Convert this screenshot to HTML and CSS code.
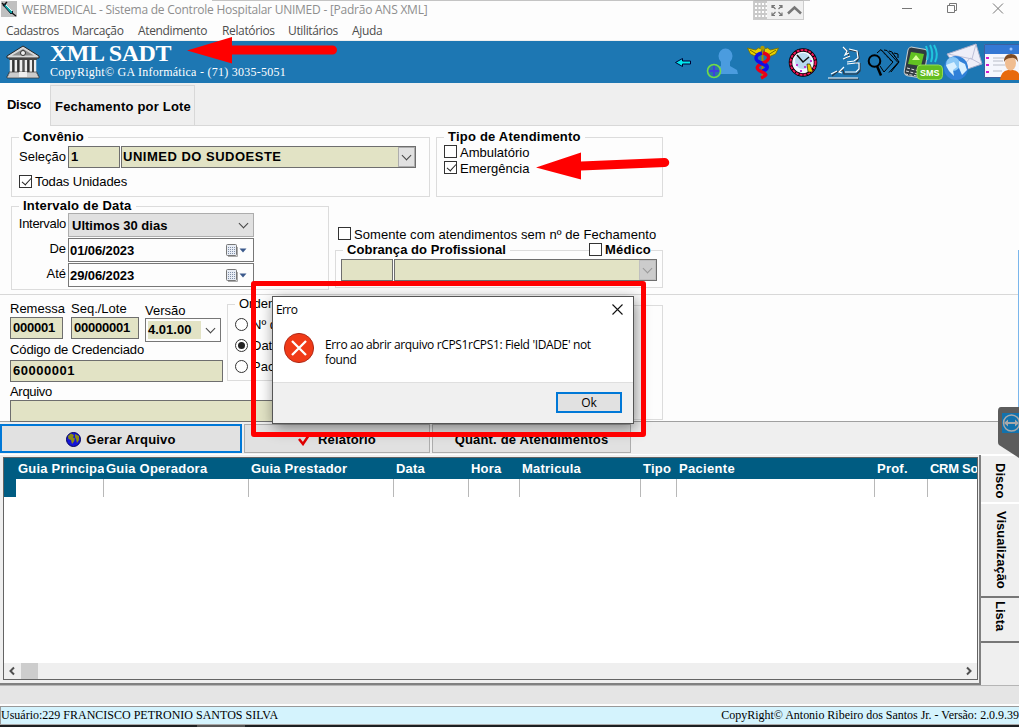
FILE: index.html
```html
<!DOCTYPE html>
<html lang="pt-BR">
<head>
<meta charset="utf-8">
<title>WEBMEDICAL</title>
<link rel="stylesheet" href="styles.css">
</head>
<body>
<div class="window">
  <header class="titlebar">
    <svg class="app-icon" width="16" height="16" viewBox="0 0 16 16"><rect width="16" height="16" fill="#c0c0c0"/><path d="M1 2l3 3M2 5l4-4" stroke="#111" stroke-width="1.5"/><path d="M4 3l8 8-2 2-7-8z" fill="#10a5a5" stroke="#123" /><path d="M5 4l6 6" stroke="#dff"/><path d="M11 12l4 3" stroke="#111" stroke-width="1.3"/></svg>
    <span class="title">WEBMEDICAL - Sistema de Controle Hospitalar UNIMED - [Padrão ANS XML]</span>
    <svg class="win-buttons" width="102" height="18" viewBox="0 0 102 18" fill="none" stroke="#777"><path d="M0 7.500h10M45.500 4.500h7v7h-7zM47.500 4v-1.500h7v7h-1.500M91 2.500l10 10M101 2.500l-10 10"/></svg>
  </header>
  <nav class="menu">
    <span class="m1">Cadastros</span><span class="m2">Marcação</span><span class="m3">Atendimento</span><span class="m4">Relatórios</span><span class="m5">Utilitários</span><span class="m6">Ajuda</span>
  </nav>
  <section class="banner">
    <svg class="bank" width="34" height="34" viewBox="0 0 34 34"><path d="M1 11L17 1l16 10v2H1z" fill="#d8d8d8" stroke="#222"/><path d="M6 10.500L17 4l11 6.500z" fill="#8a8a8a"/><circle cx="17" cy="8" r="2.500" fill="#eee" stroke="#333"/><path d="M3 13h28v2H3z" fill="#444"/><path d="M4 15h26v12H4z" fill="#555"/><path d="M5 15v12M10 15v12M15 15v12M20 15v12M25 15v12M29 15v12" stroke="#eee" stroke-width="2.500"/><path d="M7 15v12M12 15v12M22 15v12M27 15v12" stroke="#111"/><path d="M3 27h28v2h1v2h1v2H1v-2h1v-2h1z" fill="#ccc" stroke="#333" stroke-width=".7"/><path d="M13 27h8v5h-8z" fill="#eee"/></svg>
    <div class="brand"><h1>XML SADT</h1><p>CopyRight© GA Informática - (71) 3035-5051</p></div>
    <div class="tools">
      <svg width="345" height="42" viewBox="674 41 345 42">
        <path d="M675.500 62.500l7-4v2.500h8v3h-8v2.500z" fill="#00e8f0" stroke="#003" stroke-width="1"/>
        <ellipse cx="725.500" cy="56" rx="7" ry="7.500" fill="#4b9cdf"/><path d="M721 60h9v6l7 4 1 4h-27l4-5 6-3z" fill="#4b9cdf"/>
        <circle cx="714" cy="71" r="6.500" fill="#2a78a8" stroke="#72dc48" stroke-width="1.600"/><path d="M714 66v10M709 71h10" stroke="#403fe0" stroke-width="2"/>
        <path d="M747.500 48l3 6 7 3 4-5v-3l-3-1-3 2zM778.500 48l-3 6-7 3-4-5v-3l3-1 3 2z" fill="#e8d000" stroke="#776b00" stroke-width=".8"/><path d="M750 50l8 5M776 50l-8 5" stroke="#776b00"/><circle cx="762.500" cy="48" r="2.200" fill="#b09a00"/><path d="M762.500 49v30" stroke="#a09000" stroke-width="2"/><path d="M762 53c-8 2-8 8 0 10s6 7 0 8" fill="none" stroke="#1010e8" stroke-width="3.400"/><path d="M763 53c8 2 7 7 0 10s-8 6-1 9 3 4-1 6" fill="none" stroke="#e80018" stroke-width="3.400"/><path d="M757.500 61q4 3 9 5" fill="none" stroke="#1010e8" stroke-width="3"/>
        <circle cx="803" cy="62.500" r="12.500" fill="#f4f8ff" stroke="#000" stroke-width="3.500"/><circle cx="803" cy="62.500" r="12.500" fill="none" stroke="#f01458" stroke-width="2" stroke-dasharray="3 1"/><circle cx="803" cy="61" r="8" fill="#b8d9ee"/><path d="M797 55l6 7 6-5" fill="none" stroke="#111" stroke-width="1.500"/><path d="M807 64h3l3 8h-5z" fill="#ecd000" stroke="#000" stroke-width=".6"/><path d="M804 67h2M796 65h2M810 61h2M800 71h2" stroke="#c03ad0" stroke-width="2"/>
        <g fill="none" stroke-width="1.200"><path d="M844 48l4 4 1 4-4 3M849 50l9 2 1 6-4 6M832 76l5-4 6-2 1 4h13l3-3v-8M829 79h30" stroke="#303840"/><path d="M843 47l4 4-2 4 4-2M849 49l8 2 1 7-4 3-7 1M843 59l7-3M844 67l-5 5 3 1M831 74l6-3M845 72h11l3-3v-6h-3l-9 1M828 78h30" stroke="#fff"/></g>
        <g fill="none" stroke="#000"><circle cx="874.500" cy="61" r="5.800" stroke-width="2"/><path d="M877 66l4 9.500" stroke-width="2.500"/><path d="M877 53l4-3.500 12 12.500-9 10-4-6M884 50l3 .5 11 12-9 10M889 51l3 1 7 10-8 10M894 53l4 1v4" stroke-width="1"/><path d="M881 50l11 12M892 53l7 9-7 8" stroke-dasharray="1 1"/></g>
        <rect x="906" y="48" width="20" height="29" rx="4" fill="#303a40" stroke="#c6cdd0" transform="rotate(10 916 62)"/><path d="M911 52l13 2-3 12-13-2z" fill="#62c322"/><path d="M916 55l4 5h-8z" fill="#d8ff9a"/><path d="M907 68l12 3M906 71l12 3M905 74l12 2" stroke="#ddd" stroke-dasharray="3 1.500"/><path d="M926 46q3 8 1 14M930 45q4 8 1 17M934 45q5 9 1 17" fill="none" stroke="#20c5dc" stroke-width="2"/><rect x="917" y="65" width="25.500" height="14.500" rx="4" fill="#63bd20" stroke="#94dc54"/><text x="920" y="76" class="sms">SMS</text>
        <path d="M947 54l29-10 6 20-23 8z" fill="#eeeef8" stroke="#a5abc8"/><path d="M948 54l24 5 4-15M960 70l10-12 11 6" fill="none" stroke="#bec0d8"/><circle cx="956" cy="68" r="12" fill="#3180d8"/><circle cx="953" cy="64" r="7" fill="#8bc8f6"/><path d="M946 65l8-3 3 5-4 3 1 6-5-5zM959 61l6 3 2 6-5 5-3-7z" fill="#d9f0ff"/>
        <path d="M984.500 44.500H1020v33h-35.500z" fill="#f5f7fd" stroke="#3b5fa0"/><path d="M985 45h35v9h-35z" fill="#3478d4"/><circle cx="1011" cy="49" r="1.500" fill="#9cc5ff"/><path d="M986 58h3M986 65h3M986 72h3" stroke="#d01cd0" stroke-width="2"/><path d="M993 58h12M993 61h10M993 65h12M993 71h9" stroke="#b9bdc8"/><path d="M1000 80q1-9 8-10h5q6 1 7 6v4z" fill="#e86a0c"/><ellipse cx="1010.500" cy="63" rx="5.500" ry="7.500" fill="#f0bd91"/><path d="M1004 62q0-8 7-8t7 8q-3-5-7-4-5 0-7 4z" fill="#7d4a22"/>
      </svg>
    </div>
  </section>
  <div class="page-tabs"><span class="ptab on">Disco</span><span class="ptab">Fechamento por Lote</span></div>

  <section class="filters">
    <div class="frow">
      <fieldset class="group g-conv">
        <legend>Convênio</legend>
        <div class="line"><label class="lab">Seleção</label><div class="field w52">1</div><div class="field combo w295"><span class="plan">UNIMED DO SUDOESTE</span><i class="drop"></i></div></div>
        <div class="check todas"><i class="box ck"></i><span>Todas Unidades</span></div>
      </fieldset>
      <fieldset class="group g-tipo">
        <legend>Tipo de Atendimento</legend>
        <div class="check"><i class="box"></i><span>Ambulatório</span></div>
        <div class="check"><i class="box ck"></i><span>Emergência</span></div>
      </fieldset>
    </div>
    <div class="frow">
      <fieldset class="group g-int">
        <legend>Intervalo de Data</legend>
        <div class="line d"><label class="lab tight">Intervalo</label><div class="select"><span>Ultimos 30 dias</span><i class="chev"></i></div></div>
        <div class="line d"><label class="lab">De</label><div class="date"><span>01/06/2023</span><svg width="21" height="13"><use href="#cal"/></svg></div></div>
        <div class="line d"><label class="lab">Até</label><div class="date"><span>29/06/2023</span><svg width="21" height="13"><use href="#cal"/></svg></div></div>
      </fieldset>
      <div class="prof">
        <div class="check"><i class="box"></i><span class="wide">Somente com atendimentos sem nº de Fechamento</span></div>
        <fieldset class="group g-cob">
          <legend>Cobrança do Profissional</legend>
          <div class="check medico"><i class="box"></i><b>Médico</b></div>
          <div class="line"><div class="field w52"></div><div class="field combo w263"><i class="drop off"></i></div></div>
        </fieldset>
      </div>
    </div>
  </section>

  <section class="lot">
    <div class="lot-left">
      <div class="trio">
        <div class="rem"><label>Remessa</label><div class="field">000001</div></div>
        <div class="seq"><label>Seq./Lote</label><div class="field">00000001</div></div>
        <div class="ver-col"><label>Versão</label><div class="version"><span>4.01.00</span><i class="chev"></i></div></div>
      </div>
      <label class="cod">Código de Credenciado</label>
      <div class="field cred">60000001</div>
      <label class="arq">Arquivo</label>
      <div class="field arqf"></div>
    </div>
    <fieldset class="group g-ord">
      <legend>Ordenação</legend>
      <div class="radio"><i></i><span>Nº do Guia</span></div>
      <div class="radio on"><i></i><span>Data</span></div>
      <div class="radio"><i></i><span>Paciente</span></div>
    </fieldset>
    <div class="blank-group"></div>
  </section>

  <section class="actions">
    <button class="btn primary"><svg width="15" height="15" viewBox="0 0 15 15"><circle cx="7.500" cy="7.500" r="7" fill="#1414d8" stroke="#000060"/><path d="M2 4l3-2.500 3 1.500-1 2.500 2 1-1 3-2 2.500-1-4-2.500-1zM9 2l4 2v4l-2 3-1-4-1-2z" fill="#8c8c14"/></svg><span>Gerar Arquivo</span></button>
    <button class="btn b2"><svg width="12" height="12" viewBox="0 0 12 12"><path d="M1 5l4 5 6-9" fill="none" stroke="#e00000" stroke-width="2.500"/></svg><span>Relatório</span></button>
    <button class="btn b3"><span>Quant. de Atendimentos</span></button>
  </section>

  <section class="results">
    <div class="grid-frame">
      <div class="grid">
        <div class="ghead"><span>Guia Principa</span><span>Guia Operadora</span><span>Guia Prestador</span><span>Data</span><span>Hora</span><span>Matricula</span><span>Tipo</span><span>Paciente</span><span>Prof.</span><span>CRM So</span></div>
        <div class="grow"><i></i><i></i><i></i><i></i><i></i><i></i><i></i><i></i><i></i><i></i></div>
        <div class="hscroll"><svg width="8" height="10" viewBox="0 0 8 10"><path d="M6 1.500L2.500 5 6 8.500" /></svg><div class="thumb"></div><svg class="r" width="8" height="10" viewBox="0 0 8 10"><path d="M2 1.500L5.500 5 2 8.500"/></svg></div>
      </div>
    </div>
    <div class="side-tabs"><div class="s1"><span>Disco</span></div><div class="s2"><span>Visualização</span></div><div class="s3"><span>Lista</span></div></div>
  </section>
  <div class="spacer-bar"></div>
  <footer class="status"><span>Usuário:229 FRANCISCO PETRONIO SANTOS SILVA</span><span class="ver">CopyRight© Antonio Ribeiro dos Santos Jr. - Versão: 2.0.9.39</span></footer>
  <div class="taskbar"><i></i></div>

  <div class="session-bar"><svg width="50" height="18" viewBox="0 0 50 18"><path d="M0 0h13v18H0z" fill="#c9c9c9"/><g stroke="#fff" stroke-width="2" stroke-dasharray="2 1.500"><path d="M1 3h12M1 7h12M1 11h12M1 15h12"/></g><g fill="none" stroke="#777" stroke-width="1.200"><path d="M18 7V4.500h3M18 4.500l3.500 3.500M25 4.500h3V7M28 4.500L24.500 8M18 11.500v3h3M18 14.500l3.500-3.500M25 14.500h3v-3M28 14.500L24.500 11"/></g><path d="M34 12.500l6.500-6 6.500 6" fill="none" stroke="#777" stroke-width="2.500"/></svg></div>
  <div class="blue-edge"></div>
  <svg class="remote" width="21" height="51" viewBox="0 0 21 51"><path d="M3 0h18v51L1 38Q0 37 0 35V4Q0 0 3 0z" fill="#5c5c5c"/><rect x="4" y="6" width="17" height="20" fill="#1272ad"/><circle cx="13.500" cy="16" r="8" fill="none" stroke="#a9a9a9" stroke-width="1.500"/><path d="M6 16l4-3.500v2.500h7v-2.500l4 3.500-4 3.500V17h-7v2.500z" fill="#a9a9a9"/></svg>

  <div class="dialog">
    <div class="dlg-title"><span>Erro</span><svg width="11" height="11" viewBox="0 0 11 11"><path d="M.5.5l10 10M10.500.5l-10 10" stroke="#111" stroke-width="1.100"/></svg></div>
    <div class="dlg-body"><svg width="32" height="32" viewBox="0 0 32 32"><circle cx="16" cy="16" r="14.600" fill="#f03a17" stroke="#b02a18" stroke-width="1"/><path d="M9 9l14 14M23 9L9 23" stroke="#fff" stroke-width="2.300"/></svg><p><span>Erro ao abrir arquivo rCPS1rCPS1: Field 'IDADE' not</span><br><span>found</span></p></div>
    <div class="dlg-foot"><button>Ok</button></div>
  </div>
  <div class="highlight"></div>
  <svg class="arrow a1" width="152" height="30" viewBox="0 0 152 30"><path d="M0 14.500L45 1v8.500h100.500a4.500 4.500 0 0 1 0 9L45 18.500v9z" fill="#f00"/></svg>
  <svg class="arrow a2" width="134" height="30" viewBox="0 0 134 30"><path d="M0 15.500L45 .5v9l83.500-3.500a4.500 4.500 0 0 1 .5 9L45 18.500v9z" fill="#f00"/></svg>
</div>
<svg class="defs" width="0" height="0"><defs><g id="cal"><rect x=".5" y=".5" width="10" height="11" rx="1" fill="#e8edf5" stroke="#777"/><path d="M2.500 3v7M4.500 3v7M6.500 3v7M8.500 3v7" stroke="#8290a8" stroke-width="1" stroke-dasharray="1 1"/><path d="M2 12.500h9.500V3" fill="none" stroke="#aaa"/><path d="M13.500 4.500h7L17 8.500z" fill="#3c5a8c"/></g></defs></svg>
</body>
</html>
```
FILE: styles.css
```css
*{box-sizing:border-box}
body{margin:0;background:#fdfdfd;font-family:"Liberation Sans",Arial,sans-serif;font-size:13px;color:#000}
.window{position:relative;width:1019px;height:728px;overflow:hidden;display:flex;flex-direction:column;background:#fdfdfd;white-space:nowrap}
.window>*{flex:none}
h1,p{margin:0}
i{display:block;font-style:normal}
.defs{position:absolute}
.titlebar{height:20px;display:flex;align-items:flex-start;padding:1px 15px 0 1px;background:linear-gradient(#c4c4c4,#c4c4c4) 212px 0/598px 1px no-repeat}
.title{font:12px/18px "Open Sans","Noto Sans",sans-serif;letter-spacing:-.24px;color:#8e8e8e;margin-left:5px}
.win-buttons{margin-left:auto}
.menu{height:21px;border-bottom:1px solid #efefef;font:12px/21px "Open Sans","Noto Sans",sans-serif;letter-spacing:-.36px;color:#4d4d4d;display:grid;grid-template-columns:66px 66px 84px 66px 64px 60px;padding-left:6px}
.banner{height:42px;background:#1d77b3;display:flex;color:#fff;padding-left:6px}
.bank{margin-top:4px;margin-right:10px}
.brand{font-family:"Liberation Serif","Times New Roman",serif}
.brand h1{font-size:24px;line-height:25px;font-weight:bold;letter-spacing:-.46px}
.brand p{font-size:12px;line-height:13px;letter-spacing:.25px}
.tools{margin-left:auto;height:42px}
.sms{font:bold 9px "Liberation Sans",sans-serif;fill:#fff}
.page-tabs{height:43px;background:#efefef;display:flex;font-weight:bold;letter-spacing:.2px;border-bottom:1px solid #d8d8d8}
.ptab{border:1px solid #d8d8d8;border-bottom:0;margin-top:2px;width:145px;line-height:41px;padding-left:4px}
.ptab.on{margin:0;width:50px;height:43px;border:0;background:#fdfdfd;padding-left:7px;line-height:43px;letter-spacing:-.28px}
.filters{height:169px;border-bottom:1px solid #d8d8d8;padding:4px 0 0 11px;display:flex;flex-direction:column;gap:2px}
.frow{display:flex;gap:6px}
.group{margin:0;padding:0;min-width:0;border:1px solid #dcdcdc}
.group legend{padding:0 4px;margin-left:7px;font-weight:bold;line-height:14px;height:14px;letter-spacing:.22px}
.group.g-cob legend{letter-spacing:.06px}
.g-conv{width:419px;height:67px}
.g-tipo{width:227px;height:67px}
.g-tipo .check{margin-left:7px}
.g-tipo .check .box{margin-top:-1px}
.line{display:flex;gap:1px;padding-top:2px}
.lab{width:54px;margin-right:1px;text-align:right;line-height:21px}
.lab.tight{letter-spacing:-.3px}
.field{height:22px;border:1px solid #6e6e6e;background:#e2e3c5;font-weight:bold;line-height:20px;padding-left:2px}
.w52{width:52px}
.field.w295{width:295px;padding-left:1px}
.plan{letter-spacing:.5px}
.w263{width:263px}
.combo{display:flex}
.drop{width:17px;height:20px;margin-left:auto;background:#e1e1e1;border:1px solid #adadad;display:grid;place-items:center}
.drop::after,.chev::after{content:"";display:block;width:6px;height:6px;border:solid #444;border-width:0 1px 1px 0;transform:translateY(-2px) rotate(45deg)}
.drop.off{background:#ccc;border-color:#bfbfbf}
.drop.off::after{border-color:#999}
.check{display:flex;align-items:center;gap:3px;height:16px}
.box{width:13px;height:13px;border:1px solid #333;background:#fff;flex:none}
.ck::after{content:"";display:block;width:4px;height:8px;margin:0 0 0 4px;border:solid #222;border-width:0 1.300px 1.300px 0;transform:rotate(42deg)}
.todas{margin:5px 0 0 7px;letter-spacing:-.08px}
.g-int{width:318px;height:91px}
.line.d{padding:0;height:25px}
.d .lab{line-height:22px}
.select,.date{width:186px;height:24px;border:1px solid #adadad;background:#e1e1e1;font-weight:bold;display:flex;justify-content:space-between;align-items:center;padding:0 6px 0 3px}
.date{background:#fdfdfd;border-color:#777;padding-left:1px;letter-spacing:-.1px}
.prof{width:328px;padding-top:27px}
.prof>.check{padding-left:3px;height:16px}
.prof>.check .box{margin-top:-1px}
.wide{letter-spacing:.06px}
.g-cob{position:relative;height:45px;margin-top:1px}
.g-cob .line{padding:2px 0 0 5px}
.medico{position:absolute;left:253px;top:-16px;background:#fdfdfd;letter-spacing:.2px}
.lot{height:127px;display:flex;padding-left:10px;border-bottom:1px solid #a0a0a0}
.lot-left{width:213px;padding-top:6px;display:flex;flex-direction:column}
.lot-left label{display:block;line-height:16px}
.trio{display:flex;gap:8px;height:40px}
.rem{width:53px}
.seq{width:68px}
.trio .field{letter-spacing:-.22px}
.ver-col{margin-left:-2px;width:76px}
.lot-left .ver-col label{line-height:18px;margin-bottom:-2px;padding-top:1px}
.version{width:76px;height:24px;border:1px solid #777;background:#fdfdfd;font-weight:bold;display:flex;justify-content:space-between;align-items:center;padding:0 6px 0 2px}
.version span{background:#e2e3c5;width:53px;height:18px;line-height:18px}
.lot-left .cod{margin-top:1px;letter-spacing:-.12px}
.lot-left .cred{margin-top:2px;flex:none;letter-spacing:.52px}
.lot-left .arq{margin-top:2px;letter-spacing:-.3px}
.arqf{width:300px;flex:none}
.g-ord{width:150px;height:84px;margin:2px 0 0 4px}
.g-ord legend{font-weight:normal;letter-spacing:0;margin-bottom:3px}
.radio{display:flex;align-items:center;gap:4px;height:21px;padding-left:7px}
.radio i{width:13px;height:13px;border:1px solid #333;border-radius:50%;background:#fff;padding:2px}
.radio.on i::after{content:"";display:block;width:7px;height:7px;border-radius:50%;background:#222}
.blank-group{width:280px;height:115px;border:1px solid #dcdcdc;margin:10px 0 0 6px}
.actions{height:33px;background:#efefef;display:flex;gap:2px;padding-top:2px;border-bottom:1px solid #fff}
.btn{height:29px;border:1px solid #adadad;background:#e1e1e1;font:bold 13px "Liberation Sans",Arial,sans-serif;letter-spacing:.18px;padding:2px 0 0;display:flex;align-items:center;justify-content:center;gap:5px;color:#000}
.primary{width:242px;border:2px solid #0078d7}
.b2{width:186px;gap:8px}
.b3{width:199px}
.results{height:230px;display:flex;background:#efefef}
.grid-frame{width:981px;padding:2px 1px 3px 3px;border-right:2px solid #808080;border-bottom:2px solid #808080}
.grid{height:223px;border:1px solid #646464;background:#fff;display:flex;flex-direction:column}
.ghead,.grow{display:grid;grid-template-columns:100px 145px 145px 75px 51px 121px 36px 198px 53px 49px;overflow:hidden}
.ghead{height:21px;background:#005c82;color:#fff;font-weight:bold;line-height:21px;letter-spacing:.22px}
.ghead span{padding-left:2px;overflow:hidden}
.ghead span:first-child{padding-left:14px}
.ghead span:nth-child(8){letter-spacing:.31px}
.ghead span:last-child{letter-spacing:-.3px}
.grow{height:18px}
.grow i{border-right:1px solid #b8b8b8}
.grow i:first-child{border-left:12px solid #005c82}
.grow i:last-child{border-right:0}
.hscroll{margin-top:auto;height:16px;background:#efefef;display:flex;align-items:center;padding:0 4px 0 4px}
.hscroll path{fill:none;stroke:#505050;stroke-width:2}
.thumb{width:17px;height:16px;background:#cdcdcd;margin-left:5px}
.hscroll .r{margin-left:auto}
.side-tabs{width:38px;font-weight:bold;display:flex;flex-direction:column}
.side-tabs div{writing-mode:vertical-rl;display:flex;align-items:center;width:38px}
.s1{height:47px;border-top:1px solid #fff;padding-top:7px}
.s2{height:94px;border-top:2px solid #fff;padding-top:7px;padding-left:3px}
.s3{height:47px;border:solid #777;border-width:2px 0;padding-top:3px}
.spacer-bar{height:21px;background:#e5e5e5;border-top:1px solid #b5b5b5;border-bottom:2px solid #fdfdfd}
.status{height:18px;background:#d4f3fd;border-top:1px solid #999;border-left:1px solid #999;display:flex;justify-content:space-between;font:12px/17px "Liberation Serif","Times New Roman",serif}
.status .ver{letter-spacing:-.02px}
.taskbar{height:3px;background:#1c1f22;border-top:1px solid #aaa}
.taskbar i{width:48px;height:2px;margin-left:197px;background:#555}
.session-bar{position:absolute;left:753px;top:0;width:51px;height:20px;border:1px solid #ccc;border-top-color:#bbb;background:#f0f0f0}
.session-bar svg{display:block}
.blue-edge{position:absolute;right:0;top:250px;width:1px;height:157px;background:#7ab6ec}
.remote{position:absolute;left:998px;top:407px}
.dialog{position:absolute;left:272px;top:296px;width:362px;height:128px;background:#fff;border:1px solid #555;box-shadow:2px 4px 14px rgba(0,0,0,.45);display:flex;flex-direction:column;font-family:"Open Sans","Noto Sans",sans-serif;font-size:12px;letter-spacing:-.35px}
.dlg-title{height:24px;display:flex;justify-content:space-between;align-items:center;padding:0 10px 0 3px;letter-spacing:-.6px}
.dlg-body{height:62px;display:flex;gap:10px;padding:11px 0 0 10px;border-bottom:1px solid #dfdfdf}
.dlg-body p{line-height:15px;padding-top:5px}
.dlg-foot{flex:1;background:#f0f0f0;display:flex;justify-content:flex-end;padding:9px 11px 0 0}
.dlg-foot button{width:66px;height:21px;border:2px solid #0078d7;background:#e1e1e1;font:12px/16px "Open Sans",sans-serif;padding:0;color:#000}
.highlight{position:absolute;left:251px;top:281px;width:395px;height:156px;border:5px solid #f00;border-radius:3px}
.arrow{position:absolute}
.a1{left:187px;top:36px}
.a2{left:536px;top:152px}
```
